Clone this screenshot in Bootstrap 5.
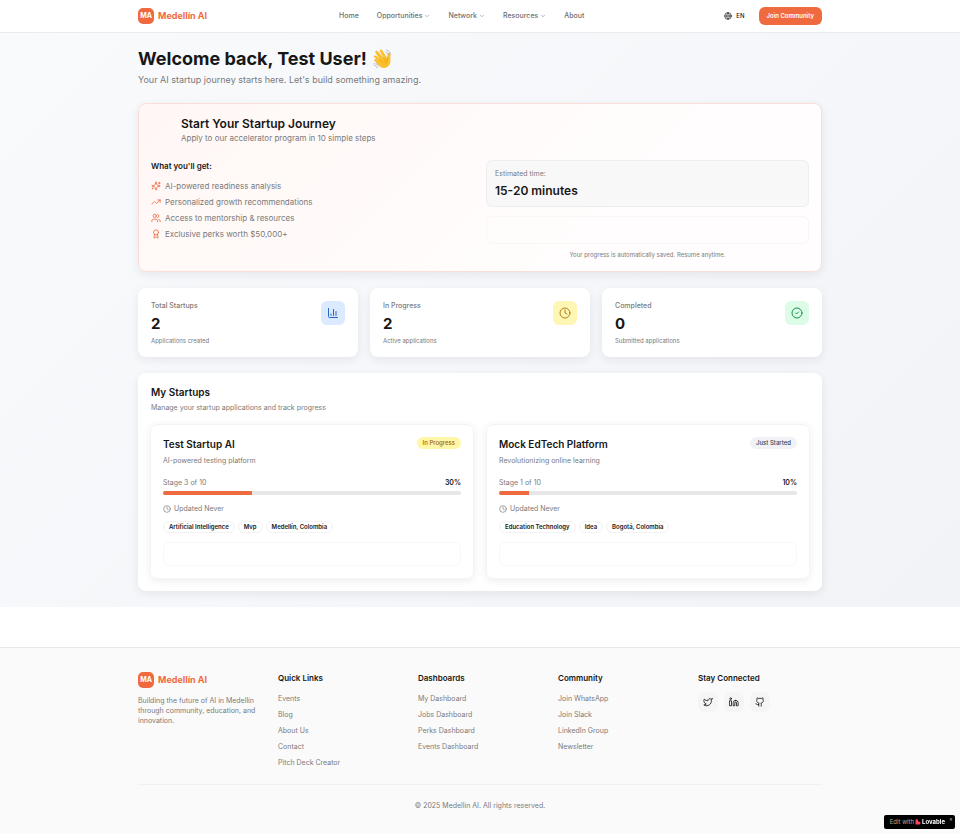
<!DOCTYPE html>
<html lang="en">
<head>
<meta charset="utf-8">
<meta name="viewport" content="width=device-width, initial-scale=1">
<title>Medellín AI – Dashboard</title>
<link href="https://cdn.jsdelivr.net/npm/bootstrap@5.3.0/dist/css/bootstrap.min.css" rel="stylesheet">
<style>
:root{--brand:#f06a40;--ink:#171717;--soft:#7a7a7a}
body{font-family:Inter,"Liberation Sans",sans-serif;font-size:7px;line-height:10px;color:var(--ink);background:#fff}
h1,h2,h3,p,ul{margin:0}
a{color:inherit;text-decoration:none}
.ico{width:8px;height:8px;fill:none;stroke:currentColor;stroke-width:2;stroke-linecap:round;stroke-linejoin:round;flex-shrink:0;display:block}
.ico-md{width:10px;height:10px}
.ico-lg{width:12px;height:12px}
.wrap{max-width:700px;padding:0 8px;margin:0 auto;width:100%}
.soft{color:var(--soft)}
.topbar{height:33px;border-bottom:1px solid #ebebeb;background:#fff}
.brand{font-size:9px;font-weight:700;color:var(--brand);gap:4px}
.brand-mark{width:16px;height:16px;border-radius:5px;background:var(--brand);color:#fff;font-size:7px}
.menu{gap:18px;margin-right:8px;font-weight:500;color:#6f6f6f}
.chev{width:6px;height:6px}
.menu button,.lang{border:0;background:none;padding:0;font:inherit;color:inherit;gap:2px}
.lang{font-size:6px;font-weight:500;gap:4px}
.actions{gap:14px}
.join{height:18px;padding:0 8px;border:0;border-radius:6px;background:var(--brand);color:#fff;font-size:6px;font-weight:600}
.stage{background:linear-gradient(135deg,#f8fafc 0%,#f5f7fa 50%,#f1f3f6 100%);padding:14px 0 16px}
.hello{font-size:18px;line-height:24px;font-weight:700;gap:6px}
.wave{width:20px;height:20px}
.intro{font-size:9px;line-height:14px;margin-top:2px}
.panel{background:#fff;border-radius:8px;box-shadow:0 3px 10px rgba(30,40,60,.08)}
.start{margin-top:16px;padding:12px;border:1px solid #fadfd9;background:linear-gradient(135deg,#fff7f5,#fffdfd 70%)}
.start-head{padding-left:30px}
.title-lg{font-size:12px;line-height:16px;font-weight:600}
.text-md{font-size:8px;line-height:12px}
.start-body{margin-top:16px}
.perks{gap:4px;margin-top:8px}
.perks li{gap:4px}
.perks .ico{color:var(--brand)}
.estimate{border:1px solid #efeeef;background:#f9f8f9;border-radius:6px;padding:8px 8px 7px}
.estimate strong{display:block;font-size:12px;line-height:16px;margin-top:4px;font-weight:600}
.ghost{display:block;width:100%;height:24px;border:1px solid #f8f8f9;background:transparent;border-radius:6px}
.ghost-lg{height:28px;margin-top:9px;border-color:#f9f6f6}
.tiny{font-size:6px;line-height:8px}
.note{margin-top:7px}
.cells{display:grid;grid-template-columns:repeat(3,1fr);gap:12px;margin-top:16px}
.halves{display:grid;grid-template-columns:1fr 1fr;gap:12px}
.stat{padding:13px 13px 12px}
.stat b{display:block;font-size:15px;line-height:18px;margin:4px 0}
.tile{width:24px;height:24px;border-radius:6px}
.blue{background:#dbeafe;color:#2563c4}
.yellow{background:#fef6b4;color:#b58212}
.green{background:#dcfce7;color:#16924a}
.mine{margin-top:16px;padding:12px}
.mine-head{padding-left:1px}
.mine-sub{margin-top:4px}
.mine-grid{margin-top:11px}
.title-md{font-size:10px;line-height:14px;font-weight:600}
.startup{padding:12px;border:1px solid #f4f4f5;border-radius:7px;box-shadow:0 2px 8px rgba(30,40,60,.08)}
.about{margin-top:5px}
.stage-row{margin-top:12px}
.updated{margin-top:9px;gap:3px}
.tags{margin:7px 0 9px;gap:3px}
.pill{font-size:6px;line-height:8px;font-weight:500;padding:2px 6px;border-radius:9px;height:12px}
.pill-y{background:#fef7a8;color:#a16207}
.pill-g{background:#f1f2f6;color:#374151}
.tag{border:1px solid #f2f2f2;font-weight:600;padding:1px 5px}
.meter{height:4px;border-radius:3px;background:#e7e7e7;margin-top:3px}
.meter .progress-bar{background:var(--brand)}
.foot{margin-top:40px;border-top:1px solid #e8e8e8;background:#fafafa;padding:24px 0 23px}
.foot-grid{display:grid;grid-template-columns:repeat(5,1fr);gap:16px}
.foot h3{font-size:8px;line-height:12px;font-weight:600;margin-bottom:8px}
.foot ul{gap:6px;padding-top:2px}
.socials{gap:6px}
.social{width:20px;height:20px;border-radius:6px;background:#f5f5f5}
.legal{border-top:1px solid #f1f1f1;margin-top:16px;padding-top:16px}
.edit{right:5px;bottom:6px;height:14px;padding:0 10px 0 6px;background:#000;color:#aaa;border-radius:2px;font-size:6px;gap:1px}
.edit b{color:#fff}
.edit button{top:1px;right:2px;padding:0;border:0;background:none;color:#bbb;line-height:5px}
</style>
</head>
<body>
<svg class="d-none" aria-hidden="true">
<symbol id="chev" viewBox="0 0 24 24"><path d="m6 9 6 6 6-6"/></symbol>
<symbol id="clock" viewBox="0 0 24 24"><circle cx="12" cy="12" r="10"/><path d="M12 6v6l4 2"/></symbol>
</svg>
<header class="topbar d-flex">
 <div class="wrap d-flex align-items-center justify-content-between">
  <a href="#" class="brand d-flex align-items-center"><span class="brand-mark d-flex align-items-center justify-content-center">MA</span>Medellín AI</a>
  <nav class="menu d-flex align-items-center">
   <a href="#">Home</a>
   <button type="button" class="d-flex align-items-center">Opportunities <svg class="ico chev"><use href="#chev"/></svg></button>
   <button type="button" class="d-flex align-items-center">Network <svg class="ico chev"><use href="#chev"/></svg></button>
   <button type="button" class="d-flex align-items-center">Resources <svg class="ico chev"><use href="#chev"/></svg></button>
   <a href="#">About</a>
  </nav>
  <div class="actions d-flex align-items-center">
   <button type="button" class="lang d-flex align-items-center"><svg class="ico" viewBox="0 0 24 24"><circle cx="12" cy="12" r="10"/><path d="M12 2a14.5 14.5 0 0 0 0 20 14.5 14.5 0 0 0 0-20M2 12h20"/></svg>EN</button>
   <button type="button" class="join">Join Community</button>
  </div>
 </div>
</header>
<main class="stage">
 <div class="wrap">
  <h1 class="hello d-flex align-items-center">Welcome back, Test User!
   <svg class="wave" viewBox="0 0 40 40" role="img" aria-label="Waving hand"><path fill="#fbc02d" d="M2 16c-1-3 3-4 5-2l7 7-9-13c-2-4 3-6 5-3l11 13-7-13c-2-4 3-6 5-2l9 15c1-5 0-8 3-10 3-1 5 1 4 5-1 5 1 10-1 16-3 8-12 12-19 7L4 25c-4-4 1-7 4-4z"/><path fill="none" stroke="#e59600" stroke-width="1.2" stroke-linecap="round" d="m14 21 5 6m2-9 5 6m2-7 2 4c-4 2-5 5-4 9"/><path fill="none" stroke="#b8bbc4" stroke-width="2" stroke-linecap="round" d="M27 2c4 1 7 4 8 8M26 6c2 1 4 3 5 5M2 29c1 4 4 7 7 8m-3-8c1 2 3 4 5 5"/></svg></h1>
  <p class="intro soft">Your AI startup journey starts here. Let's build something amazing.</p>
  <section class="panel start">
   <div class="start-head"><h2 class="title-lg">Start Your Startup Journey</h2><p class="text-md soft">Apply to our accelerator program in 10 simple steps</p></div>
   <div class="halves start-body">
    <div>
     <h3 class="text-md fw-semibold">What you'll get:</h3>
     <ul class="perks text-md soft list-unstyled d-flex flex-column">
      <li class="d-flex align-items-center"><svg class="ico ico-md" viewBox="0 0 24 24"><path d="M9.94 15.5A2 2 0 0 0 8.5 14.06l-6.14-1.58a.5.5 0 0 1 0-.96L8.5 9.94A2 2 0 0 0 9.94 8.5l1.58-6.14a.5.5 0 0 1 .96 0l1.58 6.14a2 2 0 0 0 1.44 1.44l6.14 1.58a.5.5 0 0 1 0 .96l-6.14 1.58a2 2 0 0 0-1.44 1.44l-1.58 6.14a.5.5 0 0 1-.96 0zM20 3v4m2-2h-4M4 17v2m1-1H3"/></svg>AI-powered readiness analysis</li>
      <li class="d-flex align-items-center"><svg class="ico ico-md" viewBox="0 0 24 24"><path d="m22 7-8.5 8.5-5-5L2 17M16 7h6v6"/></svg>Personalized growth recommendations</li>
      <li class="d-flex align-items-center"><svg class="ico ico-md" viewBox="0 0 24 24"><path d="M16 21v-2a4 4 0 0 0-4-4H6a4 4 0 0 0-4 4v2M22 21v-2a4 4 0 0 0-3-3.87M16 3.13a4 4 0 0 1 0 7.75"/><circle cx="9" cy="7" r="4"/></svg>Access to mentorship &amp; resources</li>
      <li class="d-flex align-items-center"><svg class="ico ico-md" viewBox="0 0 24 24"><circle cx="12" cy="8" r="6"/><path d="m15.48 12.89 1.52 8.53a.5.5 0 0 1-.81.47l-3.58-2.69a1 1 0 0 0-1.2 0l-3.59 2.69a.5.5 0 0 1-.81-.47l1.51-8.53"/></svg>Exclusive perks worth $50,000+</li>
     </ul>
    </div>
    <div>
     <div class="estimate"><span class="soft d-block">Estimated time:</span><strong>15-20 minutes</strong></div>
     <button type="button" class="ghost ghost-lg" aria-label="Start application"></button>
     <p class="note tiny soft text-center">Your progress is automatically saved. Resume anytime.</p>
    </div>
   </div>
  </section>
  <section class="cells">
   <div class="panel stat d-flex justify-content-between"><div><span class="soft fw-medium d-block">Total Startups</span><b>2</b><p class="tiny soft">Applications created</p></div><div class="tile blue d-flex align-items-center justify-content-center"><svg class="ico ico-lg" viewBox="0 0 24 24"><path d="M3 3v16a2 2 0 0 0 2 2h16M8 17v-3m5 3V5m5 12V9"/></svg></div></div>
   <div class="panel stat d-flex justify-content-between"><div><span class="soft fw-medium d-block">In Progress</span><b>2</b><p class="tiny soft">Active applications</p></div><div class="tile yellow d-flex align-items-center justify-content-center"><svg class="ico ico-lg"><use href="#clock"/></svg></div></div>
   <div class="panel stat d-flex justify-content-between"><div><span class="soft fw-medium d-block">Completed</span><b>0</b><p class="tiny soft">Submitted applications</p></div><div class="tile green d-flex align-items-center justify-content-center"><svg class="ico ico-lg" viewBox="0 0 24 24"><circle cx="12" cy="12" r="10"/><path d="m9 12 2 2 4-4"/></svg></div></div>
  </section>
  <section class="panel mine">
   <div class="mine-head"><h2 class="title-md">My Startups</h2><p class="soft mine-sub">Manage your startup applications and track progress</p></div>
   <div class="halves mine-grid">
    <article class="startup">
     <div class="d-flex justify-content-between"><h3 class="title-md">Test Startup AI</h3><span class="pill pill-y">In Progress</span></div>
     <p class="soft about">AI-powered testing platform</p>
     <div class="d-flex justify-content-between stage-row"><span class="soft">Stage 3 of 10</span><span class="fw-semibold">30%</span></div>
     <div class="progress meter" role="progressbar" aria-label="Test Startup AI progress" aria-valuenow="30" aria-valuemin="0" aria-valuemax="100"><div class="progress-bar" style="width:30%"></div></div>
     <div class="soft updated d-flex align-items-center"><svg class="ico"><use href="#clock"/></svg>Updated Never</div>
     <div class="d-flex tags"><span class="pill tag">Artificial Intelligence</span><span class="pill tag">Mvp</span><span class="pill tag">Medellín, Colombia</span></div>
     <button type="button" class="ghost" aria-label="Continue Test Startup AI"></button>
    </article>
    <article class="startup">
     <div class="d-flex justify-content-between"><h3 class="title-md">Mock EdTech Platform</h3><span class="pill pill-g">Just Started</span></div>
     <p class="soft about">Revolutionizing online learning</p>
     <div class="d-flex justify-content-between stage-row"><span class="soft">Stage 1 of 10</span><span class="fw-semibold">10%</span></div>
     <div class="progress meter" role="progressbar" aria-label="Mock EdTech Platform progress" aria-valuenow="10" aria-valuemin="0" aria-valuemax="100"><div class="progress-bar" style="width:10%"></div></div>
     <div class="soft updated d-flex align-items-center"><svg class="ico"><use href="#clock"/></svg>Updated Never</div>
     <div class="d-flex tags"><span class="pill tag">Education Technology</span><span class="pill tag">Idea</span><span class="pill tag">Bogotá, Colombia</span></div>
     <button type="button" class="ghost" aria-label="Continue Mock EdTech Platform"></button>
    </article>
   </div>
  </section>
 </div>
</main>
<footer class="foot">
 <div class="wrap">
  <div class="foot-grid">
   <div><a href="#" class="brand d-flex align-items-center mb-2"><span class="brand-mark d-flex align-items-center justify-content-center">MA</span>Medellín AI</a><p class="soft">Building the future of AI in Medellín through community, education, and innovation.</p></div>
   <div><h3>Quick Links</h3><ul class="soft list-unstyled d-flex flex-column"><li><a href="#">Events</a></li><li><a href="#">Blog</a></li><li><a href="#">About Us</a></li><li><a href="#">Contact</a></li><li><a href="#">Pitch Deck Creator</a></li></ul></div>
   <div><h3>Dashboards</h3><ul class="soft list-unstyled d-flex flex-column"><li><a href="#">My Dashboard</a></li><li><a href="#">Jobs Dashboard</a></li><li><a href="#">Perks Dashboard</a></li><li><a href="#">Events Dashboard</a></li></ul></div>
   <div><h3>Community</h3><ul class="soft list-unstyled d-flex flex-column"><li><a href="#">Join WhatsApp</a></li><li><a href="#">Join Slack</a></li><li><a href="#">LinkedIn Group</a></li><li><a href="#">Newsletter</a></li></ul></div>
   <div><h3>Stay Connected</h3><div class="d-flex socials">
    <a href="#" class="social d-flex align-items-center justify-content-center" aria-label="Twitter"><svg class="ico ico-md" viewBox="0 0 24 24"><path d="M22 4s-.7 2.1-2 3.4c1.6 10-9.4 17.3-18 11.6 2.2.1 4.4-.6 6-2C3 15.5.5 9.6 3 5c2.2 2.6 5.6 4.1 9 4-.9-4.2 4-6.6 7-3.8 1.1 0 3-1.2 3-1.2z"/></svg></a>
    <a href="#" class="social d-flex align-items-center justify-content-center" aria-label="LinkedIn"><svg class="ico ico-md" viewBox="0 0 24 24"><path d="M16 8a6 6 0 0 1 6 6v7h-4v-7a2 2 0 0 0-4 0v7h-4v-7a6 6 0 0 1 6-6zM2 9h4v12H2z"/><circle cx="4" cy="4" r="2"/></svg></a>
    <a href="#" class="social d-flex align-items-center justify-content-center" aria-label="GitHub"><svg class="ico ico-md" viewBox="0 0 24 24"><path d="M15 22v-4a4.8 4.8 0 0 0-1-3.5c3 0 6-2 6-5.5.08-1.25-.27-2.48-1-3.5.28-1.15.28-2.35 0-3.5 0 0-1 0-3 1.5-2.64-.5-5.36-.5-8 0C6 2 5 2 5 2c-.3 1.15-.3 2.35 0 3.5A5.4 5.4 0 0 0 4 9c0 3.5 3 5.5 6 5.5-.39.49-.68 1.05-.85 1.65S8.93 17.38 9 18v4M9 18c-4.51 2-5-2-7-2"/></svg></a>
   </div></div>
  </div>
  <p class="legal soft text-center">© 2025 Medellín AI. All rights reserved.</p>
 </div>
</footer>
<div class="edit position-fixed d-flex align-items-center"><span>Edit with</span><svg width="6" height="6" viewBox="0 0 12 12" aria-hidden="true"><path fill="#ff405c" d="M1 3a2.5 2.5 0 0 1 5 0v2h2a3 3 0 0 1 0 6H1z"/></svg><b>Lovable</b><button type="button" class="position-absolute" aria-label="Dismiss">×</button></div>
<script src="https://cdn.jsdelivr.net/npm/bootstrap@5.3.0/dist/js/bootstrap.bundle.min.js"></script>
</body>
</html>
